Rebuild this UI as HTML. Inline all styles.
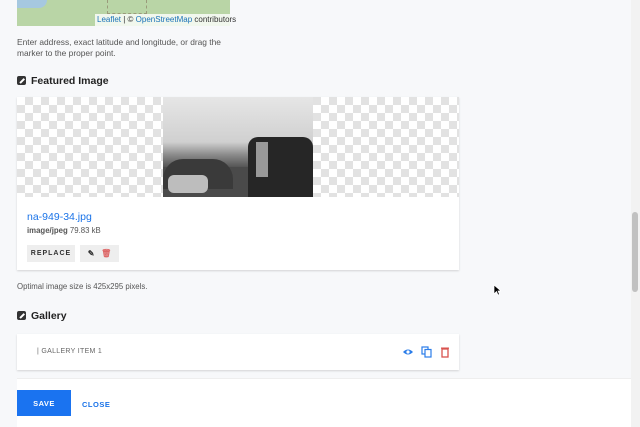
<!DOCTYPE html>
<html><head><meta charset="utf-8"><style>
*{box-sizing:border-box;margin:0;padding:0}
body{width:640px;height:427px;overflow:hidden;background:#f7f8fa;font-family:"Liberation Sans",sans-serif;position:relative;color:#333}
.abs{position:absolute}
.map{left:17px;top:0;width:213px;height:26px;background:#b9d5a6}
.attr{left:95px;top:14px;width:135px;height:12px;background:rgba(255,255,255,.8);font-size:8px;line-height:12px;padding-left:2px;color:#333;white-space:nowrap}
.attr span{color:#1a73b8}
.help{left:17px;top:37px;font-size:8.4px;line-height:11px;color:#555;width:225px}
.h{font-size:10.5px;font-weight:bold;color:#222}
.ico{display:inline-block;width:9px;height:9px;background:#333;border-radius:2px;margin-right:5px;vertical-align:-1px;position:relative}
.ico:after{content:"";position:absolute;left:2px;top:4px;width:6px;height:1.5px;background:#fff;transform:rotate(-45deg)}
.card{background:#fff;box-shadow:0 1px 2px rgba(0,0,0,.15)}
.checker{background-color:#fff;background-image:linear-gradient(45deg,#e2e2e2 25%,transparent 25%,transparent 75%,#e2e2e2 75%),linear-gradient(45deg,#e2e2e2 25%,transparent 25%,transparent 75%,#e2e2e2 75%);background-size:16px 16px;background-position:0 0,8px 8px}
.photo{left:163px;top:97px;width:150px;height:100px;background:linear-gradient(#e6e6e6 0%,#d0d0d0 45%,#8a8a8a 58%,#555 70%,#6a6a6a 100%);overflow:hidden}
.btn{background:#eee;font-size:7px;font-weight:bold;letter-spacing:1px;color:#333;text-align:center;line-height:17px}
</style></head><body>
<div class="abs map"><div class="abs" style="left:0;top:0;width:30px;height:8px;background:#a6c8e0;border-radius:0 0 10px 0"></div><div class="abs" style="left:90px;top:0;width:40px;height:14px;border:1px dashed #9a9a7a;border-top:none"></div></div>
<div class="abs attr"><span>Leaflet</span> | © <span>OpenStreetMap</span> contributors</div>
<div class="abs help">Enter address, exact latitude and longitude, or drag the marker to the proper point.</div>
<div class="abs h" style="left:17px;top:75px"><span class="ico"></span>Featured Image</div>
<div class="abs card" style="left:17px;top:97px;width:442px;height:173px"></div>
<div class="abs checker" style="left:17px;top:97px;width:442px;height:100px"></div>
<div class="abs photo">
<div class="abs" style="left:0;top:70px;width:150px;height:30px;background:#4a4a4a"></div>
<div class="abs" style="left:0;top:62px;width:70px;height:30px;background:#3a3a3a;border-radius:20px 20px 0 0"></div>
<div class="abs" style="left:5px;top:78px;width:40px;height:18px;background:#bdbdbd;border-radius:6px"></div>
<div class="abs" style="left:85px;top:40px;width:65px;height:60px;background:#262626;border-radius:10px 10px 0 0"></div>
<div class="abs" style="left:93px;top:45px;width:12px;height:35px;background:#999"></div>
</div>
<div class="abs" style="left:27px;top:211px;font-size:10.5px;color:#1a73e8">na-949-34.jpg</div>
<div class="abs" style="left:27px;top:226px;font-size:7.8px;color:#555"><b>image/jpeg</b> 79.83 kB</div>
<div class="abs btn" style="left:27px;top:245px;width:48px">REPLACE</div>
<div class="abs btn" style="left:80px;top:245px;width:39px;font-size:8px;letter-spacing:0"><span style="color:#333">✎</span>&nbsp;&nbsp;&nbsp;<span style="color:#d66">🗑</span></div>
<div class="abs" style="left:17px;top:282px;font-size:7.8px;color:#555">Optimal image size is 425x295 pixels.</div>
<div class="abs h" style="left:17px;top:310px"><span class="ico"></span>Gallery</div>
<div class="abs card" style="left:17px;top:334px;width:442px;height:36px"></div>
<div class="abs" style="left:37px;top:348px;font-size:7px;color:#666;letter-spacing:.3px">| GALLERY ITEM 1</div>
<svg class="abs" style="left:402px;top:346px" width="50" height="12" viewBox="0 0 50 12">
<path d="M1 6 Q6 1 11 6 Q6 11 1 6Z" fill="#2b7de9"/><circle cx="6" cy="6" r="1.6" fill="#fff"/>
<rect x="20" y="1" width="6" height="7" fill="none" stroke="#2b7de9" stroke-width="1.2"/><rect x="23" y="3.5" width="6" height="7.5" fill="#fff" stroke="#2b7de9" stroke-width="1.2"/>
<rect x="40" y="3" width="6" height="8" fill="none" stroke="#d9534f" stroke-width="1.3"/><rect x="39" y="1.5" width="8" height="1.2" fill="#d9534f"/>
</svg>
<div class="abs" style="left:17px;top:378px;width:614px;height:49px;background:#fff;border-top:1px solid #eee"></div>
<div class="abs" style="left:17px;top:390px;width:54px;height:26px;background:#1a73f0;color:#fff;font-size:7.5px;font-weight:bold;letter-spacing:.5px;text-align:center;line-height:27px">SAVE</div>
<div class="abs" style="left:82px;top:400px;font-size:7.5px;font-weight:bold;color:#1a73e8;letter-spacing:.5px">CLOSE</div>
<div class="abs" style="left:631px;top:0;width:9px;height:427px;background:#f2f2f2"></div>
<div class="abs" style="left:632px;top:212px;width:6px;height:80px;background:#c1c1c1;border-radius:3px"></div>
<svg class="abs" style="left:493px;top:284px" width="8" height="12"><path d="M1 1 L1 10 L3.5 7.5 L5 11 L6.5 10.3 L5 7 L8 7Z" fill="#000" stroke="#fff" stroke-width=".7"/></svg>
</body></html>
